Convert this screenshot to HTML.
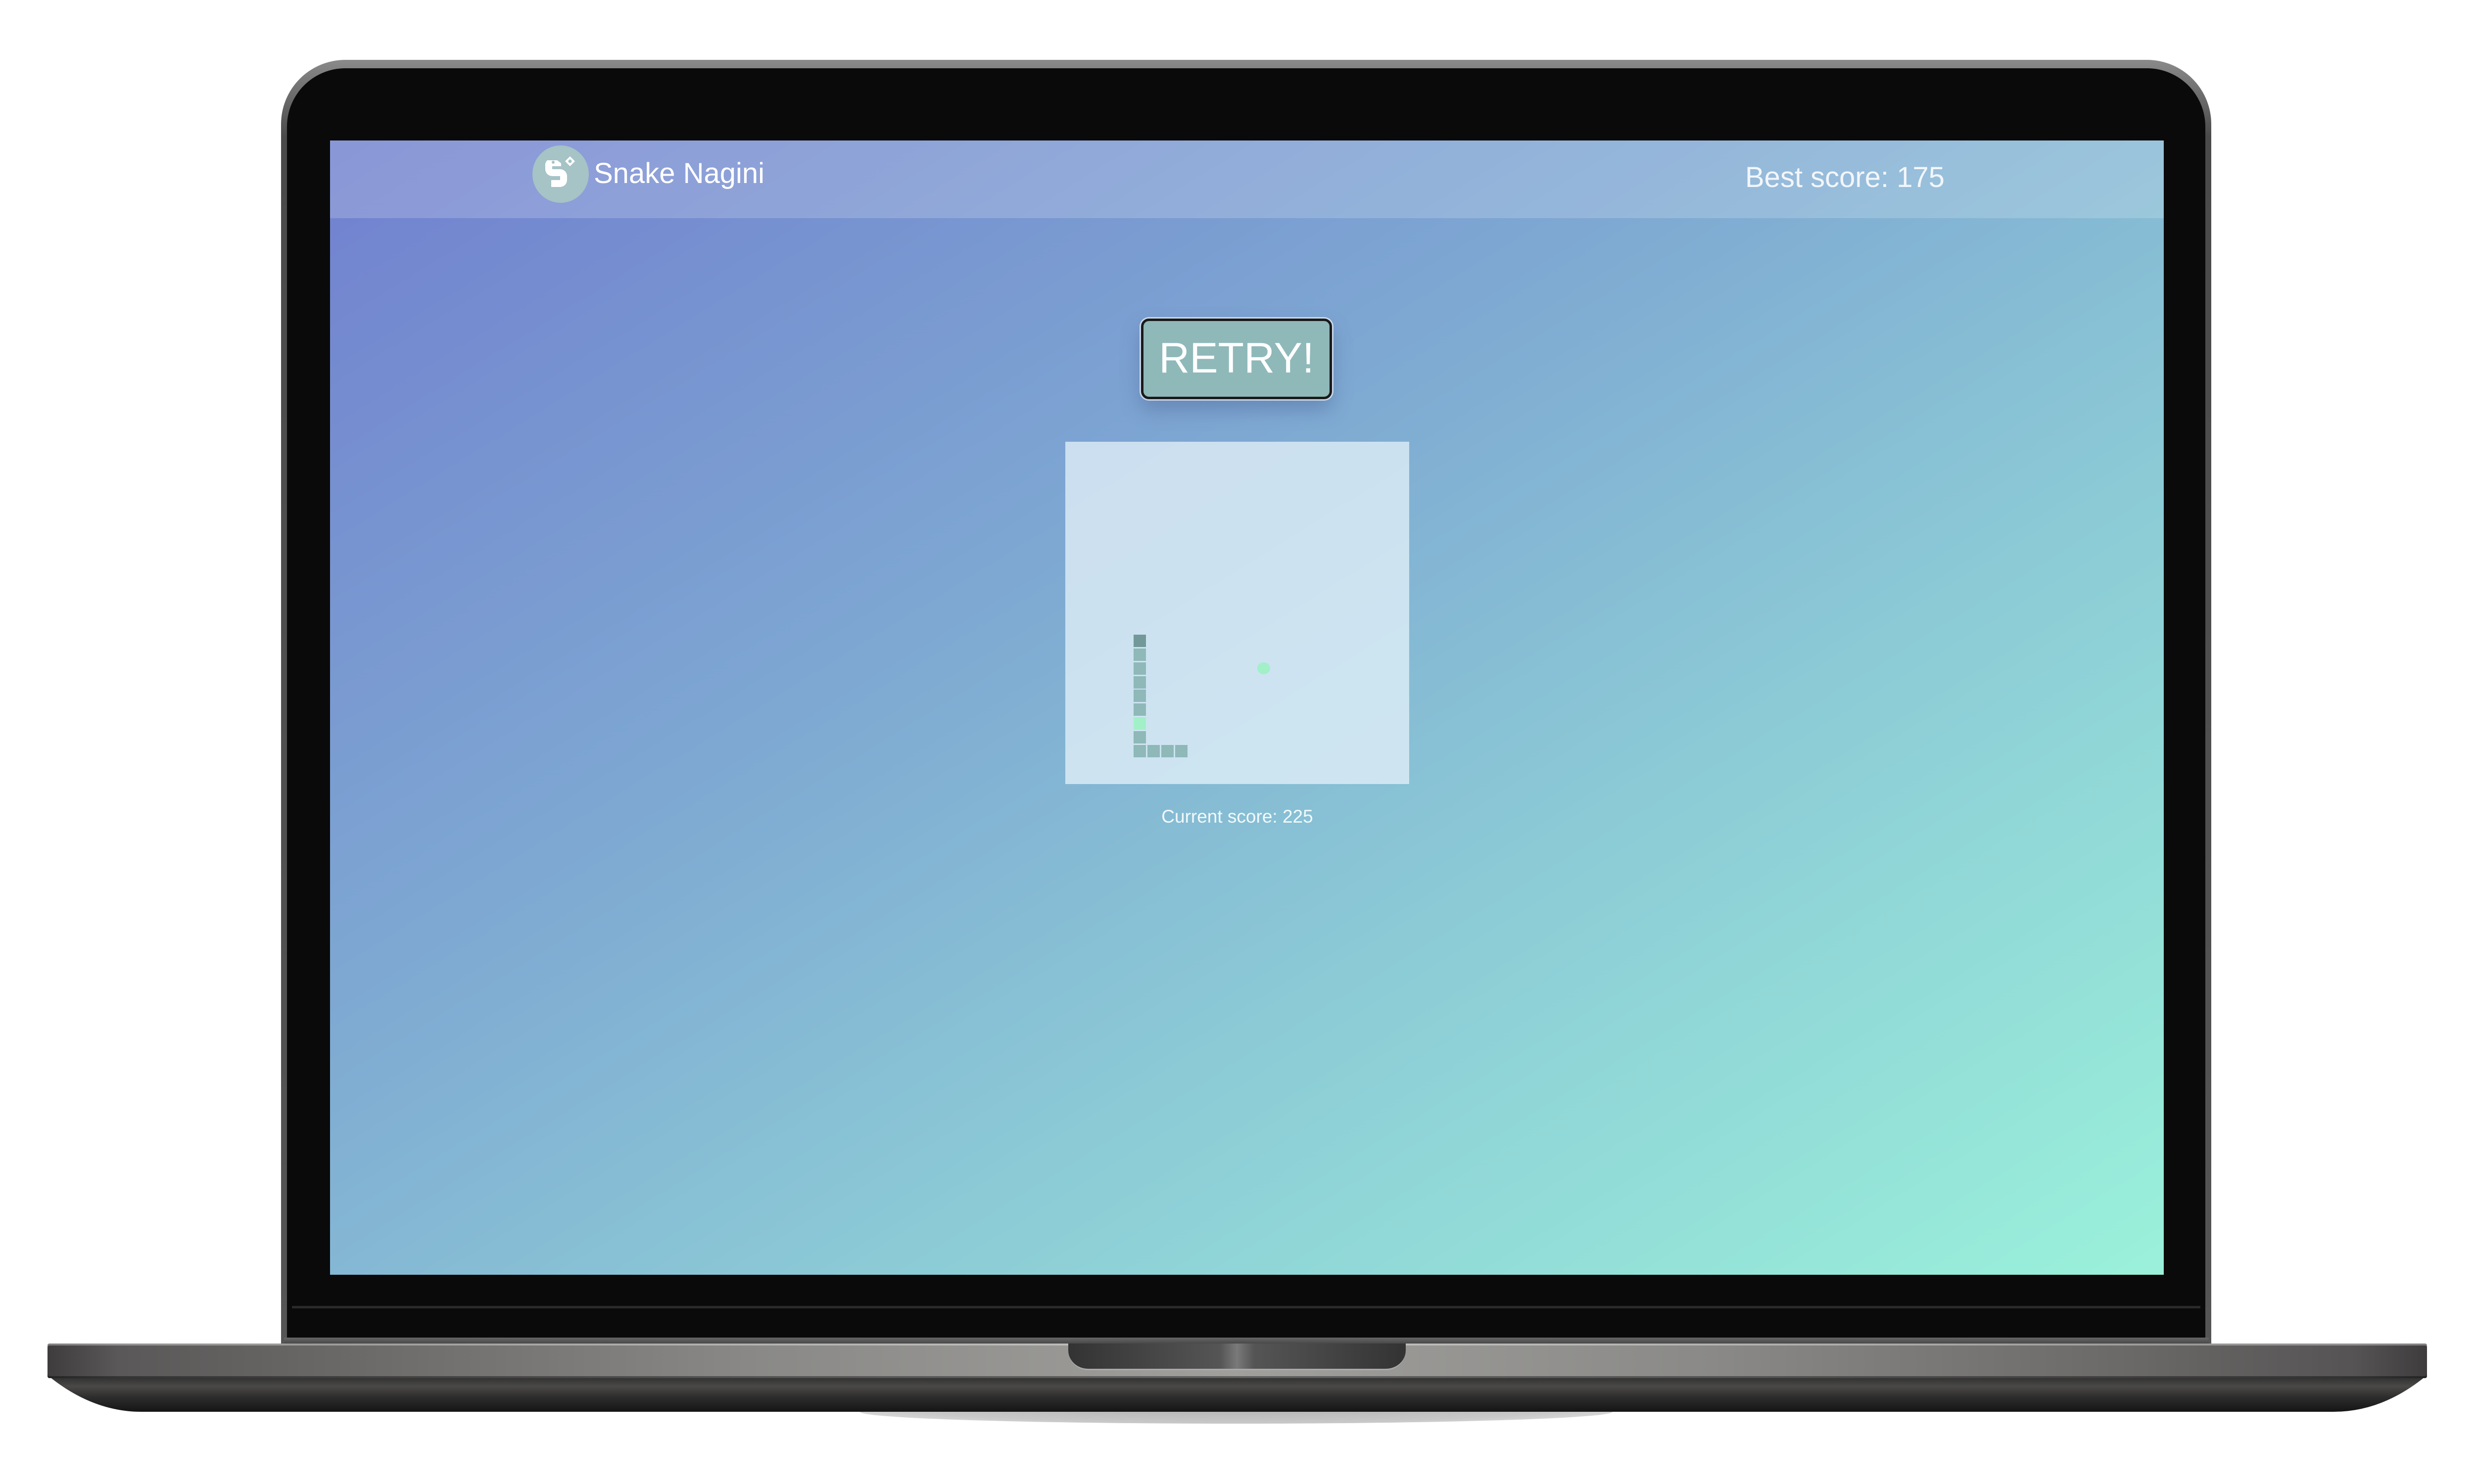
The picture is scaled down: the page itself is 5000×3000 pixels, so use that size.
<!DOCTYPE html>
<html><head><meta charset="utf-8"><style>
*{margin:0;padding:0;box-sizing:border-box}
body{width:5000px;height:3000px;background:#fff;position:relative;overflow:hidden;font-family:"Liberation Sans",sans-serif}
.a{position:absolute}
</style></head><body>
<!-- lid -->
<div class="a" style="left:568px;top:121px;width:3901px;height:2600px;border-radius:130px 130px 0 0;background:linear-gradient(#8a8a8a,#4a4a4a 6%,#555 100%)"></div>
<div class="a" style="left:580px;top:138px;width:3877px;height:2570px;border-radius:118px 118px 0 0;background:#0a0a0a"></div>
<div class="a" style="left:590px;top:2640px;width:3857px;height:5px;background:#2a2a2a"></div>
<div class="a" style="left:574px;top:2704px;width:3890px;height:14px;background:linear-gradient(#666,#444)"></div>
<!-- screen -->
<div class="a" style="left:667px;top:284px;width:3706px;height:2293px;background:linear-gradient(to bottom right,#7180cf 0%,#7ea8d2 38%,#8ccbd6 65%,#9af1da 100%);overflow:hidden">
  <div class="a" style="left:0;top:0;width:3706px;height:157px;background:rgba(255,255,255,0.18)"></div>
  <div class="a" style="left:409px;top:10px;width:114px;height:116px;border-radius:50%;background:#a6c3c6"></div>
  <svg class="a" style="left:425px;top:26px" width="84" height="84" viewBox="0 0 84 84">
    <path d="M14 14 h20 l8 6 v6 h-18 v6 h16 a14 14 0 0 1 14 14 v8 a14 14 0 0 1 -14 14 h-18 v-14 h18 v-8 h-16 a14 14 0 0 1 -14 -14 v-6 a14 14 0 0 1 4 -12z" fill="#fff"/>
    <circle cx="26" cy="18" r="3" fill="#a6c3c6"/>
    <path d="M60 6 l10 10 l-10 10 l-10 -10z" fill="#fff"/><circle cx="60" cy="16" r="3.5" fill="#a6c3c6"/>
  </svg>
  <div class="a" style="left:533px;top:38px;font-size:58px;color:#fff;line-height:1;white-space:nowrap">Snake Nagini</div>
  <div class="a" style="left:2860px;top:46px;font-size:58px;color:#f2f6fb;line-height:1;white-space:nowrap">Best score: 175</div>
  <!-- button -->
  <div class="a" style="left:1639px;top:360px;width:386px;height:163px;border-radius:16px;background:#8fb8b9;border:5px solid #1a1a1a;box-shadow:0 0 0 3px rgba(255,255,255,.6),0 20px 40px rgba(60,80,130,.35);color:#fff;font-size:86px;line-height:150px;text-align:center">RETRY!</div>
  <!-- board -->
  <div class="a" style="left:1486px;top:609px;width:695px;height:692px;background:rgba(225,240,248,0.78)"></div>
  <div class="a" style="left:1624px;top:999px;width:25px;height:25px;background:#739899"></div>
  <div class="a" style="left:1624px;top:1027px;width:25px;height:25px;background:#8fb8b9"></div>
  <div class="a" style="left:1624px;top:1055px;width:25px;height:25px;background:#8fb8b9"></div>
  <div class="a" style="left:1624px;top:1083px;width:25px;height:25px;background:#8fb8b9"></div>
  <div class="a" style="left:1624px;top:1110px;width:25px;height:25px;background:#8fb8b9"></div>
  <div class="a" style="left:1624px;top:1138px;width:25px;height:25px;background:#8fb8b9"></div>
  <div class="a" style="left:1624px;top:1166px;width:25px;height:25px;background:#a1f0c8"></div>
  <div class="a" style="left:1624px;top:1194px;width:25px;height:25px;background:#8fb8b9"></div>
  <div class="a" style="left:1624px;top:1222px;width:25px;height:25px;background:#8fb8b9"></div>
  <div class="a" style="left:1652px;top:1222px;width:25px;height:25px;background:#8fb8b9"></div>
  <div class="a" style="left:1680px;top:1222px;width:25px;height:25px;background:#8fb8b9"></div>
  <div class="a" style="left:1708px;top:1222px;width:25px;height:25px;background:#8fb8b9"></div>
  <div class="a" style="left:1874px;top:1055px;width:26px;height:24px;border-radius:50%;background:#a1f0c8"></div>
  <div class="a" style="left:1486px;top:1348px;width:695px;text-align:center;font-size:37px;color:#f2f9fa;line-height:1">Current score: 225</div>
</div>
<!-- base -->
<div class="a" style="left:1738px;top:2830px;width:1521px;height:48px;border-radius:0 0 50% 50%;background:radial-gradient(ellipse at 50% 0,#a8a8a8,#c8c8c8 70%,rgba(220,220,220,.6))"></div>
<svg class="a" style="left:96px;top:2780px" width="4809" height="74" viewBox="0 0 4809 74">
  <defs><linearGradient id="g" x1="0" y1="0" x2="0" y2="1"><stop offset="0" stop-color="#2a2a2a"/><stop offset=".3" stop-color="#4a4948"/><stop offset=".6" stop-color="#2e2d2d"/><stop offset="1" stop-color="#151515"/></linearGradient></defs>
  <path d="M0 0 H4809 Q4720 74 4620 74 H190 Q90 74 0 0z" fill="url(#g)"/>
</svg>
<div class="a" style="left:96px;top:2716px;width:4809px;height:70px;border-radius:4px;background:linear-gradient(90deg,#3e3c3d 0%,#5a5858 3%,#6a6866 12%,#8a8987 30%,#a09f9c 50%,#8a8987 70%,#6a6866 88%,#555354 97%,#3e3c3d 100%);box-shadow:inset 0 4px 0 rgba(255,255,255,.35),inset 0 -4px 0 rgba(0,0,0,.4)"></div>
<div class="a" style="left:2159px;top:2716px;width:682px;height:54px;border-radius:0 0 40px 40px;background:linear-gradient(90deg,#333,#555 45%,#7a7a7a 50%,#555 55%,#333);border-bottom:3px solid #aaa"></div>
</body></html>
